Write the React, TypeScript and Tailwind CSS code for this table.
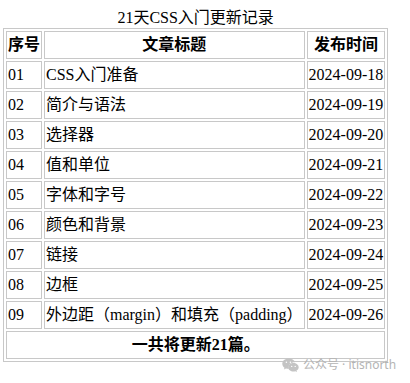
import React from "react";

const rows: [string, string, string][] = [
  ["01", "CSS入门准备", "2024-09-18"],
  ["02", "简介与语法", "2024-09-19"],
  ["03", "选择器", "2024-09-20"],
  ["04", "值和单位", "2024-09-21"],
  ["05", "字体和字号", "2024-09-22"],
  ["06", "颜色和背景", "2024-09-23"],
  ["07", "链接", "2024-09-24"],
  ["08", "边框", "2024-09-25"],
  ["09", "外边距（margin）和填充（padding）", "2024-09-26"],
];

const cell = "border border-[#c8c8c8] px-[1px] py-[1px] leading-[24px] whitespace-nowrap";

export default function App() {
  return (
    <div
      className="relative w-[410px] h-[383px] bg-white text-black text-[16px]"
      style={{ fontFamily: '"Liberation Serif", "Noto Sans CJK SC", serif' }}
    >
      <div className="pt-[7px] pl-[3px]">
        <table className="border-separate border-spacing-[2px] border border-[#c8c8c8]">
          <caption className="leading-[21px] text-center">21天CSS入门更新记录</caption>
          <thead>
            <tr>
              <th className={`${cell} font-bold text-center`}>序号</th>
              <th className={`${cell} font-bold text-center`}>文章标题</th>
              <th className={`${cell} font-bold text-center`}>发布时间</th>
            </tr>
          </thead>
          <tbody>
            {rows.map((r) => (
              <tr key={r[0]}>
                <td className={`${cell} text-left`}>{r[0]}</td>
                <td className={`${cell} text-left`}>{r[1]}</td>
                <td className={`${cell} text-left`}>{r[2]}</td>
              </tr>
            ))}
            <tr>
              <td colSpan={3} className={`${cell} font-bold text-center`}>
                一共将更新21篇。
              </td>
            </tr>
          </tbody>
        </table>
      </div>
      <div
        className="absolute left-[282px] top-[357px] flex items-center gap-[4px] text-[#b4b4b4] text-[12px] leading-[16px]"
        style={{ fontFamily: '"Noto Sans", "Noto Sans CJK SC", sans-serif' }}
      >
        <svg width="17" height="15" viewBox="0 0 17 15" fill="#c4c4c4">
          <path d="M6.5 0.5C3 0.5 0.3 2.8 0.3 5.7c0 1.6 0.9 3 2.2 4l-0.6 1.8 2.1-1.1c0.8 0.2 1.6 0.4 2.5 0.4h0.4c-0.2-0.5-0.3-1-0.3-1.5 0-2.9 2.8-5.1 6.1-5.1h0.4C12.4 2.1 9.7 0.5 6.5 0.5z" />
          <path d="M16.7 9.2c0-2.4-2.4-4.3-5.2-4.3S6.2 6.8 6.2 9.2s2.4 4.3 5.3 4.3c0.6 0 1.2-0.1 1.8-0.3l1.7 0.9-0.5-1.5c1.3-0.8 2.2-2 2.2-3.4z" />
          <circle cx="4.4" cy="4.3" r="0.8" fill="#fff" />
          <circle cx="8.4" cy="4.3" r="0.8" fill="#fff" />
          <circle cx="9.7" cy="8.4" r="0.7" fill="#fff" />
          <circle cx="13.2" cy="8.4" r="0.7" fill="#fff" />
        </svg>
        <span>公众号 · itisnorth</span>
      </div>
    </div>
  );
}
